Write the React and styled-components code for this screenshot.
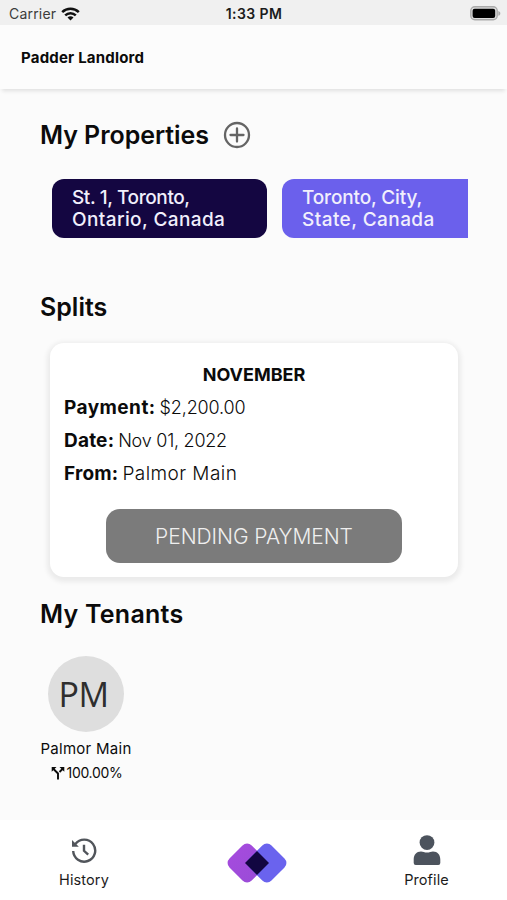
import React from 'react';
import styled, { createGlobalStyle } from 'styled-components';

const GlobalStyle = createGlobalStyle`
  * {
    box-sizing: border-box;
  }
  body {
    margin: 0;
    background: #fbfbfb;
    color: #0b0b0b;
    font-family: Inter, 'Liberation Sans', sans-serif;
  }
`;

const Screen = styled.div`
  width: 507px;
  height: 900px;
  display: flex;
  flex-direction: column;
  overflow: hidden;
  background: #fbfbfb;
`;

const StatusBar = styled.div`
  height: 25px;
  display: grid;
  grid-template-columns: 1fr auto 1fr;
  align-items: center;
  padding: 2px 6px 0 9px;
  background: #f0f0f0;
  font-size: 14px;
  line-height: 20px;
`;

const Carrier = styled.div`
  display: flex;
  align-items: center;
  gap: 5px;
  color: #3c3c3c;
  letter-spacing: 0.2px;
`;

const Clock = styled.div`
  margin-right: 2px;
  color: #1c1c1c;
  font-weight: 600;
  letter-spacing: 0.4px;
`;

const BatteryIcon = styled.svg`
  justify-self: end;
`;

const Header = styled.header`
  height: 64px;
  flex: none;
  display: flex;
  align-items: center;
  padding: 1px 21px 0;
  background: #fcfcfc;
  box-shadow: 0 4px 4px -2px rgba(0, 0, 0, 0.11);
`;

const AppTitle = styled.h1`
  margin: 0;
  font-size: 15px;
  font-weight: 700;
  line-height: 20px;
  letter-spacing: 0.2px;
`;

const Main = styled.main`
  flex: 1;
  padding: 28px 39px 0 40px;
`;

const Heading = styled.h2`
  height: 36px;
  margin: 0;
  display: flex;
  align-items: center;
  gap: 14px;
  font-size: 25px;
  font-weight: 600;
  line-height: 36px;
  letter-spacing: ${({ $spacing }) => $spacing || '0'};
`;

const PropertyList = styled.div`
  display: flex;
  gap: 15px;
  margin: 26px 0 51px;
  padding-left: 12px;
  overflow: hidden;
`;

const Property = styled.div`
  flex: none;
  width: 215px;
  height: 59px;
  padding: 8px 20px 0;
  border-radius: 12px;
  background: ${({ $color }) => $color};
  color: #f1effc;
  font-size: 19px;
  font-weight: 500;
  line-height: 22px;
  white-space: nowrap;
`;

const AddressLine = styled.div`
  letter-spacing: ${({ $spacing }) => $spacing};
`;

const SplitCard = styled.section`
  height: 234px;
  margin: 18px 10px 19px;
  padding: 15px 15px 0;
  border-radius: 14px;
  background: #fff;
  box-shadow: 0 2px 5px 3px rgba(0, 0, 0, 0.065);
  font-size: 18px;
  line-height: 33px;
`;

const Month = styled.div`
  text-align: center;
  font-weight: 700;
`;

const Detail = styled.div`
  height: 33px;
  display: flex;
  align-items: baseline;
  gap: 4px;
`;

const DetailLabel = styled.span`
  margin-left: -1px;
  font-size: 19px;
  font-weight: 700;
  letter-spacing: ${({ $spacing }) => $spacing || '0'};
`;

const DetailValue = styled.span`
  font-size: ${({ $size }) => $size || '18px'};
  font-weight: 300;
  letter-spacing: ${({ $spacing }) => $spacing || '0'};
`;

const PendingButton = styled.button`
  display: block;
  width: 296px;
  height: 54px;
  margin: 19px 0 0 41px;
  padding: 0;
  border: none;
  border-radius: 14px;
  background: #7b7b7b;
  color: #efefef;
  font-family: inherit;
  font-size: 21px;
  font-weight: 300;
  letter-spacing: -0.05px;
`;

const Tenant = styled.div`
  width: 92px;
  margin-top: 24px;
  display: flex;
  flex-direction: column;
  align-items: center;
  font-size: 15px;
  line-height: 24px;
  white-space: nowrap;
`;

const TenantName = styled.div`
  letter-spacing: 0.28px;
`;

const Avatar = styled.div`
  width: 76px;
  height: 76px;
  margin-bottom: 5px;
  padding-right: 5px;
  display: flex;
  align-items: center;
  justify-content: center;
  border-radius: 50%;
  background: #dedede;
  color: #2e2e2e;
  font-family: 'Open Sans', sans-serif;
  font-size: 34px;
  letter-spacing: -0.5px;
`;

const Share = styled.div`
  display: flex;
  align-items: center;
  gap: 2px;
  padding-left: 1px;
  font-size: 14px;
  letter-spacing: -0.3px;
`;

const TabBar = styled.nav`
  height: 80px;
  flex: none;
  display: grid;
  grid-template-columns: 168px 178px 161px;
  background: #fff;
`;

const Tab = styled.div`
  display: flex;
  flex-direction: column;
  align-items: center;
  padding-top: ${({ $top }) => $top || '15px'};
  color: #1c1c1c;
  font-size: 14.5px;
  line-height: 20px;
  letter-spacing: 0.1px;
`;

const TabIcon = styled.svg`
  display: block;
  margin-bottom: ${({ $gap }) => $gap || '5px'};
`;

const properties = [
  {
    id: 1,
    color: '#140641',
    lines: [
      { text: 'St. 1, Toronto,', spacing: '-0.4px' },
      { text: 'Ontario, Canada', spacing: '0.4px' },
    ],
  },
  {
    id: 2,
    color: '#6b60ec',
    lines: [
      { text: 'Toronto, City,', spacing: '-0.15px' },
      { text: 'State, Canada', spacing: '0.43px' },
    ],
  },
];

const details = [
  { label: 'Payment:', labelSpacing: '0.45px', value: '$2,200.00', valueSpacing: '-0.15px' },
  { label: 'Date:', labelSpacing: '0.2px', value: 'Nov 01, 2022', valueSpacing: '-0.25px' },
  { label: 'From:', labelSpacing: '0.2px', value: 'Palmor Main', valueSize: '19px', valueSpacing: '0.45px' },
];

const App = () => (
  <>
    <GlobalStyle />
    <Screen>
      <StatusBar>
        <Carrier>
          Carrier
          <svg width="19" height="14" viewBox="0 0 19 14" fill="none" stroke="#111" strokeWidth="2.5">
            <path d="M1.2 5.1C5.8 0.6 13.2 0.6 17.8 5.1" />
            <path d="M4.2 8.3C7.2 5.4 11.8 5.4 14.8 8.3" />
            <path d="M6.5 10.5C8.2 8.9 10.8 8.9 12.5 10.5L9.5 13.6Z" fill="#111" stroke="none" />
          </svg>
        </Carrier>
        <Clock>1:33 PM</Clock>
        <BatteryIcon width="31" height="15" viewBox="0 0 31 15">
          <rect x="0.8" y="0.8" width="26.4" height="13" rx="4" fill="#dedede" stroke="#aaa" strokeWidth="1.4" />
          <rect x="2.6" y="2.7" width="22.6" height="9.3" rx="2" fill="#000" />
          <path d="M28.3 5v4.8c1.3-.4 2-1.3 2-2.4s-.7-2-2-2.4z" fill="#aaa" />
        </BatteryIcon>
      </StatusBar>
      <Header>
        <AppTitle>Padder Landlord</AppTitle>
      </Header>
      <Main>
        <Heading $spacing="-0.06px">
          My Properties
          <svg width="28" height="28" viewBox="0 0 28 28" fill="none" stroke="#646464" strokeWidth="2.3">
            <circle cx="14" cy="14" r="12" />
            <path d="M14 7.5v13M7.5 14h13" strokeLinecap="round" />
          </svg>
        </Heading>
        <PropertyList>
          {properties.map(property => (
            <Property key={property.id} $color={property.color}>
              {property.lines.map(line => (
                <AddressLine key={line.text} $spacing={line.spacing}>{line.text}</AddressLine>
              ))}
            </Property>
          ))}
        </PropertyList>
        <Heading>Splits</Heading>
        <SplitCard>
          <Month>NOVEMBER</Month>
          {details.map(detail => (
            <Detail key={detail.label}>
              <DetailLabel $spacing={detail.labelSpacing}>{detail.label}</DetailLabel>
              <DetailValue $size={detail.valueSize} $spacing={detail.valueSpacing}>{detail.value}</DetailValue>
            </Detail>
          ))}
          <PendingButton>PENDING PAYMENT</PendingButton>
        </SplitCard>
        <Heading $spacing="0.25px">My Tenants</Heading>
        <Tenant>
          <Avatar>PM</Avatar>
          <TenantName>Palmor Main</TenantName>
          <Share>
            <svg width="14" height="14" viewBox="0 0 14 14" fill="none" stroke="#0b0b0b" strokeWidth="1.9">
              <path d="M2 2.5L7 7.5V13.5M12 2.5L8.5 6" />
              <path d="M0.7 1H5.5L0.7 5.8ZM13.3 1H8.5L13.3 5.8Z" fill="#0b0b0b" stroke="none" />
            </svg>
            100.00%
          </Share>
        </Tenant>
      </Main>
      <TabBar>
        <Tab $top="17px">
          <TabIcon $gap="6px" width="28" height="27" viewBox="0 0 28 27" fill="none" stroke="#51555b" strokeWidth="2.4">
            <path d="M3.2 14A11 11 0 1 0 5.4 7" />
            <path d="M2 3V9.8H8.8Z" fill="#51555b" stroke="none" />
            <path d="M14 7.8V13.8L18.2 17.6" />
          </TabIcon>
          History
        </Tab>
        <Tab $top="22px">
          <TabIcon width="62" height="42" viewBox="0 0 62 42">
            <defs>
              <linearGradient id="purple" x1="0" x2="1">
                <stop offset="0" stopColor="#a44bdd" />
                <stop offset="1" stopColor="#9b4cd8" />
              </linearGradient>
            </defs>
            <rect x="5.4" y="5.3" width="31.4" height="31.4" rx="6.5" fill="url(#purple)" transform="rotate(45 21.1 21)" />
            <rect x="25.2" y="5.3" width="31.4" height="31.4" rx="6.5" fill="#6a63ee" transform="rotate(45 40.9 21)" />
            <path d="M31 8.9L43 21L31 33.1L19 21Z" fill="#120641" />
          </TabIcon>
        </Tab>
        <Tab>
          <TabIcon width="28" height="30" viewBox="0 0 28 30" fill="#4c535d">
            <circle cx="14" cy="7.6" r="7.4" />
            <path d="M0.7 28V24.5C0.7 19.5 3.5 16.5 8 16.5C10 16.5 11.5 17.6 14 17.6S18 16.5 20 16.5C24.5 16.5 27.3 19.5 27.3 24.5V28Q27.3 30 25.3 30H2.7Q0.7 30 0.7 28Z" />
          </TabIcon>
          Profile
        </Tab>
      </TabBar>
    </Screen>
  </>
);

export default App;
